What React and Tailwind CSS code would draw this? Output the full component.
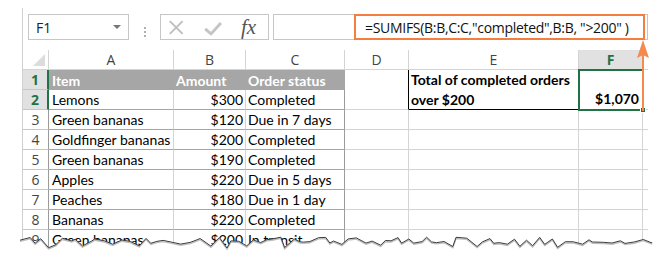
import React from "react";

const CELL = "font-['Lato','Liberation_Sans',sans-serif] text-[14px] leading-[19px] text-black";
const UI = "font-['Open_Sans','Liberation_Sans',sans-serif]";

const rows = [
  ["Lemons", "$300", "Completed"],
  ["Green bananas", "$120", "Due in 7 days"],
  ["Goldfinger bananas", "$200", "Completed"],
  ["Green bananas", "$190", "Completed"],
  ["Apples", "$220", "Due in 5 days"],
  ["Peaches", "$180", "Due in 1 day"],
  ["Bananas", "$220", "Completed"],
  ["Green bananas", "$200", "In transit"],
];

// jagged torn edge along the bottom of the sheet
function tearPoints() {
  let seed = 11;
  const rnd = () => {
    seed = (seed * 9301 + 49297) % 233280;
    return seed / 233280;
  };
  const pts = [];
  let x = 20;
  let up = true;
  while (x < 652) {
    const y = up ? 237 + rnd() * 5 : 242 + rnd() * 6;
    pts.push(`${x.toFixed(1)},${y.toFixed(1)}`);
    x += 3 + rnd() * 8;
    up = rnd() > 0.35 ? !up : up;
  }
  pts.push(`652,242`);
  return pts;
}

function ColHead({ children, active }) {
  return (
    <div
      className={`flex items-center justify-center border-r border-b border-[#d4d4d4] ${UI} text-[14px] ${
        active ? "bg-[#e1e1e1] text-[#217346] font-bold" : "text-[#444]"
      }`}
    >
      {children}
    </div>
  );
}

function RowHead({ n, active }) {
  return (
    <div
      className={`flex items-center justify-center border-b ${UI} text-[14px] ${
        active
          ? "bg-[#e1e1e1] text-[#217346] font-bold border-r-2 border-r-[#217346] border-b-[#c6c6c6]"
          : "text-[#444] border-r border-r-[#9b9b9b] border-b-[#c6c6c6]"
      }`}
    >
      {n}
    </div>
  );
}

export default function App() {
  const pts = tearPoints();

  return (
    <div className="relative w-[666px] h-[266px] bg-white overflow-hidden">
      <div className="ml-[22px] mt-[8px] w-[626px] border-l border-[#d0d0d0]">
        {/* formula bar */}
        <div className="flex h-[42px] pt-[6px] pl-[5px]">
          <div className={`relative w-[101px] h-[26px] border border-[#c6c6c6] flex items-center pl-[7px] ${UI} text-[14px] text-[#222]`}>
            F1
            <span className="absolute right-[7px] top-[10px] w-0 h-0 border-l-[4px] border-r-[4px] border-t-[4px] border-l-transparent border-r-transparent border-t-[#777]" />
          </div>
          <div className="w-[31px] flex flex-col items-center justify-center gap-[2px]">
            <span className="w-[2px] h-[2px] bg-[#b0b0b0]" />
            <span className="w-[2px] h-[2px] bg-[#b0b0b0]" />
            <span className="w-[2px] h-[2px] bg-[#b0b0b0]" />
          </div>
          <div className="w-[109px] h-[26px] border border-[#c6c6c6] flex items-center">
            <svg width="109" height="24" viewBox="0 0 109 24">
              <path d="M9 6 L22 19 M22 6 L9 19" stroke="#bfbfbf" strokeWidth="2" fill="none" />
              <path d="M45 14 L51 19 L61 8" stroke="#c4c4c4" strokeWidth="3" fill="none" strokeLinejoin="round" />
            </svg>
            <span className="absolute ml-[80px] font-['Liberation_Serif',serif] italic text-[21px] text-[#555] leading-none">
              fx
            </span>
          </div>
          <div className={`ml-[4px] flex-1 h-[26px] border border-[#c6c6c6] flex items-center pl-[91px] ${UI} text-[14px] text-[#111] whitespace-nowrap tracking-[-0.3px]`}>
            =SUMIFS(B:B,C:C,"completed",B:B, "&gt;200" )
          </div>
        </div>

        {/* sheet grid */}
        <div className="relative grid grid-cols-[26px_125px_72px_99px_64px_170px_64px_5px] auto-rows-[20px]">
          <div className="relative border-r border-b border-[#d4d4d4]">
            <span className="absolute right-[3px] bottom-[3px] w-0 h-0 [border-bottom:12px_solid_#dcdcdc] [border-left:12px_solid_transparent]" />
          </div>
          <ColHead>A</ColHead>
          <ColHead>B</ColHead>
          <ColHead>C</ColHead>
          <ColHead>D</ColHead>
          <ColHead>E</ColHead>
          <ColHead active>F</ColHead>
          <div className="border-b border-[#d4d4d4]" />

          {/* row 1 */}
          <RowHead n={1} active />
          <div className={`${CELL} bg-[#a6a6a6] text-white font-bold pl-[3px] flex items-center`}>Item</div>
          <div className={`${CELL} bg-[#a6a6a6] text-white font-bold pl-[2px] flex items-center`}>Amount</div>
          <div className={`${CELL} bg-[#a6a6a6] text-white font-bold pl-[2px] flex items-center border-r border-[#a6a6a6]`}>Order status</div>
          <div className="row-span-2 border-r border-r-black border-b border-b-[#d4d4d4]" />
          <div className={`${CELL} row-span-2 border-b border-b-black border-r border-r-[#d4d4d4] font-bold pl-[2px] leading-[20px] whitespace-nowrap`}>
            Total of completed orders
            <br />
            over $200
          </div>
          <div className={`${CELL} row-span-2 border-r border-b border-[#d4d4d4] font-bold flex items-end justify-end pr-[3px] pb-[1px]`}>
            $1,070
          </div>
          <div className="row-span-2 border-b border-[#d4d4d4]" />

          {rows.map((r, i) => (
            <React.Fragment key={i}>
              <RowHead n={i + 2} active={i === 0} />
              <div className={`${CELL} pl-[3px] flex items-center border-r border-r-[#d4d4d4] border-b border-b-[#a6a6a6] whitespace-nowrap`}>{r[0]}</div>
              <div className={`${CELL} pr-[2px] flex items-center justify-end border-r border-r-[#d4d4d4] border-b border-b-[#a6a6a6]`}>{r[1]}</div>
              <div className={`${CELL} pl-[2px] flex items-center border-r border-r-[#9b9b9b] border-b border-b-[#a6a6a6] whitespace-nowrap`}>{r[2]}</div>
              {i > 0 && (
                <>
                  <div className="border-r border-b border-[#d4d4d4]" />
                  <div className="border-r border-b border-[#d4d4d4]" />
                  <div className="border-r border-b border-[#d4d4d4]" />
                  <div className="border-b border-[#d4d4d4]" />
                </>
              )}
            </React.Fragment>
          ))}

          {/* selection F1:F2 */}
          <div className="absolute left-[555px] top-[19px] w-[66px] h-[42px] border-2 border-[#217346] pointer-events-none" />
          <div className="absolute left-[617px] top-[57px] w-[6px] h-[6px] bg-[#217346] border border-white pointer-events-none" />
        </div>
      </div>

      {/* formula highlight */}
      <div className="absolute left-[354px] top-[14px] w-[291px] h-[26px] border-2 border-[#f47d3f] pointer-events-none" />

      {/* arrow + torn edge */}
      <svg className="absolute inset-0 pointer-events-none" width="666" height="266" viewBox="0 0 666 266">
        <line x1="643" y1="52" x2="643" y2="111" stroke="#f58a4f" strokeWidth="2" />
        <path d="M643 40 L637 58 L643 55 L649 58 Z" fill="#f58a4f" />
        <polygon points={[...pts, "666,266", "0,266", "0,242"].join(" ")} fill="white" />
        <polyline points={pts.map((p) => p.split(",").map((v, k) => (k === 1 ? Number(v) + 1.2 : v)).join(",")).join(" ")} fill="none" stroke="#bdbdbd" strokeWidth="1.4" />
        <polyline points={pts.join(" ")} fill="none" stroke="#3a3a3a" strokeWidth="1" />
      </svg>
    </div>
  );
}
